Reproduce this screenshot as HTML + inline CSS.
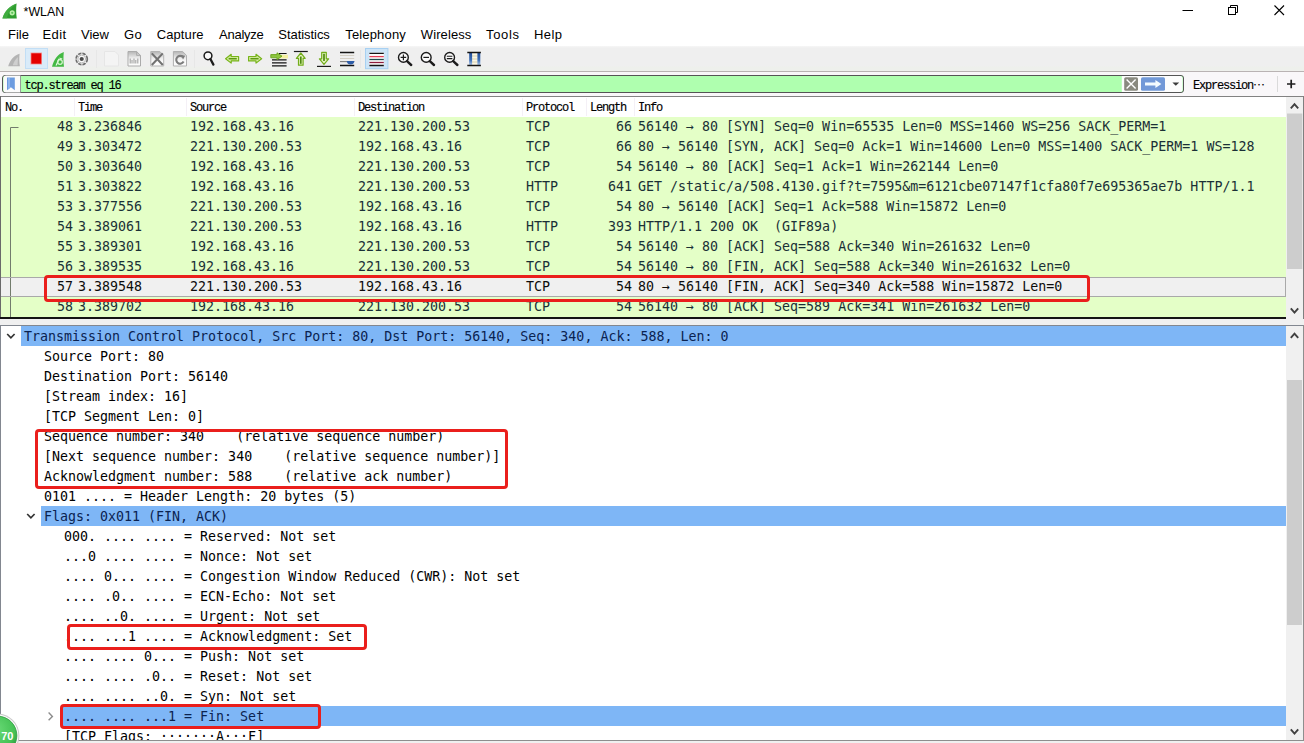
<!DOCTYPE html>
<html>
<head>
<meta charset="utf-8">
<title>*WLAN</title>
<style>
html,body{margin:0;padding:0;}
body{width:1304px;height:743px;overflow:hidden;background:#fff;position:relative;font-family:"Liberation Sans",sans-serif;color:#000;}
.abs{position:absolute;}
#title{left:0;top:0;width:1304px;height:24px;background:#fff;}
#title .t{position:absolute;left:23.6px;top:3px;font-size:12.4px;line-height:18px;color:#000;}
#menu{left:0;top:24px;width:1304px;height:22px;background:#fff;}
#menu span{position:absolute;top:2px;font-size:13px;line-height:18px;white-space:nowrap;}
#tool{left:0;top:46px;width:1304px;height:25px;background:linear-gradient(#f6f6f6 0,#efefef 2px,#efefef 20px,#eef0ec 21px);border-bottom:1px solid #b9b3b3;}
#filter{left:0;top:72px;width:1304px;height:24px;background:#f9f7f9;}
#fbox{left:2px;top:75px;width:1180px;height:16px;border:1px solid #555;border-radius:3px;background:#afffaf;}
.sim{font-family:"Liberation Mono",monospace;font-size:12px;letter-spacing:-1.2px;white-space:pre;color:#000;-webkit-text-stroke:0.15px #000;}
#plist{left:0;top:96px;width:1304px;height:222px;background:#fff;}
.mono{font-family:"DejaVu Sans Mono","Liberation Mono",monospace;font-size:13.3px;white-space:pre;color:#1a3036;}
.row{position:absolute;left:1px;width:1285px;height:20px;background:#e4ffc7;}
.row span{position:absolute;top:0;line-height:20px;}
.row .r{text-align:right;}
.hd span{position:absolute;top:.5px;line-height:20px;color:#000;}
.drow{position:absolute;height:20px;line-height:20px;color:#000;}
.red{position:absolute;border:3px solid #ea1f1c;border-radius:4px;box-sizing:border-box;}
</style>
</head>
<body>
<div id="title" class="abs"><span class="t">*WLAN</span></div>
<svg class="abs" style="left:0;top:0" width="1304" height="24" viewBox="0 0 1304 24">
<path d="M16.6 3.4 C10 5.5 4.5 11 2.4 18.4 L16.8 18.4 C16 13 16 8 16.6 3.4 Z" fill="#2f9e2f"/>
<path d="M16.6 3.4 C10 5.5 4.5 11 2.4 18.4 L7 18.4 C8 12 11.5 7 16.6 3.4 Z" fill="#4db84d" opacity=".55"/>
<circle cx="12.2" cy="12.8" r="2.6" fill="#b9f0a8"/>
<circle cx="12.2" cy="12.8" r="1.1" fill="#5cc45c"/>
<path d="M1182.5 10.5 H1193" stroke="#000" stroke-width="1" fill="none"/>
<rect x="1228.5" y="7.5" width="7" height="7" fill="#fff" stroke="#000" stroke-width="1"/>
<path d="M1230.5 7.5 V5.5 H1237.5 V12.5 H1235.5" fill="none" stroke="#000" stroke-width="1"/>
<path d="M1274.5 5.5 L1284 15 M1284 5.5 L1274.5 15" stroke="#000" stroke-width="1.1" fill="none"/>
</svg>
<div id="menu" class="abs"><span style="left:8px;letter-spacing:0px">File</span><span style="left:42.5px;letter-spacing:0.4px">Edit</span><span style="left:81px;letter-spacing:0px">View</span><span style="left:124px;letter-spacing:0.4px">Go</span><span style="left:156.7px;letter-spacing:0.1px">Capture</span><span style="left:219px;letter-spacing:-0.25px">Analyze</span><span style="left:278.3px;letter-spacing:-0.05px">Statistics</span><span style="left:345.3px;letter-spacing:0.15px">Telephony</span><span style="left:420.8px;letter-spacing:0.1px">Wireless</span><span style="left:486px;letter-spacing:0.65px">Tools</span><span style="left:534px;letter-spacing:0.45px">Help</span></div>
<div id="tool" class="abs"></div>
<svg class="abs" style="left:0;top:46px" width="500" height="26" viewBox="0 46 500 26">
<!-- 1 gray fin -->
<path d="M19.6 53.8 C14 55.6 10 60 8.2 66.3 L19.9 66.3 C19.2 62 19.2 58 19.6 53.8 Z" fill="#b4b4b4"/>
<path d="M18 57 C15.5 59 13.6 62 12.8 65.3 L17.6 65.3 Z" fill="#cfcfcf"/>
<!-- 2 stop -->
<rect x="25.5" y="48.5" width="22" height="20" fill="#d9ebf9" stroke="#c2def5" stroke-width="1"/>
<rect x="30.5" y="52.5" width="11.5" height="12" fill="#f4a0a0"/>
<rect x="31.3" y="53.3" width="10" height="10.4" fill="#e40000"/>
<!-- 3 green fin restart -->
<path d="M63.8 52 C58 54 54 59 52 66.8 L64 66.8 C63.3 62 63.3 57 63.8 52 Z" fill="#43b943"/>
<path d="M55.5 65.5 L58.5 58.5 L59.6 59 L56.8 65.5 Z" fill="#e9f9e9"/>
<circle cx="60" cy="62" r="2.3" fill="none" stroke="#d8f5d0" stroke-width="1.2"/>
<path d="M59.2 57.5 L62.6 58.4 L60.2 60.6 Z" fill="#d8f5d0"/>
<!-- 4 gear -->
<circle cx="81.7" cy="59" r="5.6" fill="#fafafa" stroke="#6e6e6e" stroke-width="1.7" stroke-dasharray="3.4 1.0"/>
<circle cx="81.7" cy="59" r="3.9" fill="none" stroke="#b9b9b9" stroke-width="1"/>
<circle cx="81.7" cy="59" r="2.1" fill="#4a4a4a"/>
<!-- separators -->
<path d="M96.5 50 V68 M194.5 50 V68 M360.5 50 V68" stroke="#e7e7e7" stroke-width="1"/>
<!-- 5 open (disabled, faint) -->
<path d="M104.5 51.5 H115 L118.5 55 V66 H104.5 Z" fill="#f4f4f4" stroke="#e6e6e6" stroke-width="1"/>
<!-- 6 save -->
<defs><linearGradient id="gf" x1="0" y1="0" x2="0" y2="1"><stop offset="0" stop-color="#b4b4b4"/><stop offset=".45" stop-color="#ececec"/><stop offset=".7" stop-color="#fbfbfb"/></linearGradient></defs>
<path d="M128 51.5 H136.6 L140.5 55.4 V66 H128 Z" fill="url(#gf)" stroke="#ababab" stroke-width="1"/>
<path d="M136.6 51.5 V55.4 H140.5" fill="none" stroke="#ababab" stroke-width="1"/>
<path d="M130.2 58.6 V63.6 M132 60 V63.6 M134 58.6 V63.6 M135.8 60 V63.6 M137.8 58.6 V63.6" stroke="#a2a2a2" stroke-width="1.1"/>
<!-- 7 close -->
<path d="M150.8 51.5 H159.8 L163.7 55.4 V66 H150.8 Z" fill="url(#gf)" stroke="#b4b4b4" stroke-width="1"/>
<path d="M151.8 53.4 L162.8 65 M162.8 53.4 L151.8 65" stroke="#727272" stroke-width="2.1"/>
<!-- 8 reload -->
<path d="M173.4 51.5 H182.6 L186.5 55.4 V66 H173.4 Z" fill="url(#gf)" stroke="#b0b0b0" stroke-width="1"/>
<path d="M183.6 61.6 A3.9 3.9 0 1 1 182.9 57" fill="none" stroke="#7c7c7c" stroke-width="2.1"/>
<path d="M181 55 L185.2 55.8 L183 59.4 Z" fill="#7c7c7c"/>
<!-- 9 find -->
<circle cx="208" cy="55.8" r="3.9" fill="#fafafa" stroke="#1c1c1c" stroke-width="1.5"/>
<path d="M210.4 59 L213.4 64.6" stroke="#1c1c1c" stroke-width="2.3" stroke-linecap="round"/>
<!-- 10 back -->
<path d="M225.6 58.7 L231.2 54.3 V56.5 H238.6 V60.9 H231.2 V63.1 Z" fill="#d9efa6" stroke="#77b41a" stroke-width="1.2" stroke-linejoin="round"/>
<path d="M228.6 58.7 H236.8" stroke="#5d9a10" stroke-width="1.6"/>
<!-- 11 forward -->
<path d="M261.6 58.7 L256 54.3 V56.5 H248.6 V60.9 H256 V63.1 Z" fill="#d9efa6" stroke="#77b41a" stroke-width="1.2" stroke-linejoin="round"/>
<path d="M250.4 58.7 H258.6" stroke="#5d9a10" stroke-width="1.6"/>
<!-- 12 goto -->
<rect x="278" y="54.8" width="10" height="3.6" fill="#f4f0a0"/>
<path d="M279 53.5 H286.6 M272 59.9 H286.6 M272 62.8 H286.6 M272 65.8 H286.6" stroke="#141414" stroke-width="1.2"/>
<path d="M270.8 54.6 H277 V52.8 L282 56.2 L277 59.6 V57.8 H270.8 Z" fill="#8cc63f" stroke="#6aa31a" stroke-width=".9" stroke-linejoin="round"/>
<!-- 13 first -->
<path d="M293.9 51.5 H307.8" stroke="#1c1c1c" stroke-width="1.2"/>
<path d="M300.8 53 L305.2 58.4 H303.1 V65.2 H298.5 V58.4 H296.4 Z" fill="#e4f4bf" stroke="#73ad1c" stroke-width="1.2" stroke-linejoin="round"/>
<path d="M300.8 56.5 V63.8" stroke="#4f8a10" stroke-width="1.7"/>
<!-- 14 last -->
<path d="M317 66.4 H331" stroke="#1c1c1c" stroke-width="1.2"/>
<path d="M324 64.4 L328.6 58.8 H326.3 V52.4 H321.7 V58.8 H319.4 Z" fill="#e4f4bf" stroke="#73ad1c" stroke-width="1.2" stroke-linejoin="round"/>
<path d="M324 53.8 V61" stroke="#4f8a10" stroke-width="1.7"/>
<!-- 15 autoscroll -->
<path d="M340 52.5 H354.2 M340 65.5 H354.2" stroke="#141414" stroke-width="1.3"/>
<path d="M340 55.5 H354.2 M340 58.5 H354.2" stroke="#d4cfc4" stroke-width="1"/>
<path d="M340 61.6 H354.2" stroke="#7d7d7d" stroke-width="1.1"/>
<path d="M346.8 61 H354.4 C354.4 63.4 352.4 64.6 350.6 64.6 C348.6 64.6 346.8 63.4 346.8 61 Z" fill="#2f5ea8"/>
<!-- 16 colorize -->
<rect x="365.5" y="48.5" width="22.4" height="20.2" fill="#cce4f7" stroke="#a7d0f2" stroke-width="1"/>
<rect x="369.4" y="52.6" width="14.4" height="13.6" fill="#fdfdfd"/>
<path d="M369.4 53.3 H383.8 M369.4 65.5 H383.8" stroke="#141414" stroke-width="1.3"/>
<path d="M369.4 56.6 H383.8" stroke="#e23e57" stroke-width="1.3"/>
<path d="M369.4 59.5 H383.8" stroke="#1f4e4e" stroke-width="1.3"/>
<path d="M369.4 62.5 H383.8" stroke="#8d1d3d" stroke-width="1.3"/>
<!-- 17 zoom in -->
<circle cx="403.4" cy="57.4" r="4.9" fill="#fafafa" stroke="#1c1c1c" stroke-width="1.4"/>
<path d="M407 61.2 L411.2 65" stroke="#1c1c1c" stroke-width="2.4" stroke-linecap="round"/>
<path d="M400.6 57.4 H406.2 M403.4 54.6 V60.2" stroke="#1c1c1c" stroke-width="1.2"/>
<!-- 18 zoom out -->
<circle cx="426.2" cy="57.4" r="4.9" fill="#fafafa" stroke="#1c1c1c" stroke-width="1.4"/>
<path d="M429.8 61.2 L434 65" stroke="#1c1c1c" stroke-width="2.4" stroke-linecap="round"/>
<path d="M423.4 57.4 H429" stroke="#1c1c1c" stroke-width="1.2"/>
<!-- 19 zoom 1:1 -->
<circle cx="449.6" cy="57.4" r="4.9" fill="#fafafa" stroke="#1c1c1c" stroke-width="1.4"/>
<path d="M453.2 61.2 L457.4 65" stroke="#1c1c1c" stroke-width="2.4" stroke-linecap="round"/>
<path d="M446.8 56.3 H452.4 M446.8 58.6 H452.4" stroke="#1c1c1c" stroke-width="1.1"/>
<!-- 20 resize columns -->
<rect x="472" y="53" width="5.6" height="12" fill="#fbf7e4"/>
<path d="M472 56 H477.6 M472 59 H477.6 M472 62 H477.6" stroke="#d9d2b0" stroke-width="1"/>
<defs><linearGradient id="gb" x1="0" y1="0" x2="0" y2="1"><stop offset="0" stop-color="#244f98"/><stop offset=".6" stop-color="#3f71b8"/><stop offset="1" stop-color="#a9c4e6"/></linearGradient></defs>
<rect x="469.2" y="53" width="2.9" height="12" fill="url(#gb)"/>
<rect x="477.4" y="53" width="2.9" height="12" fill="url(#gb)"/>
<path d="M467.3 52.5 H480.9 M467.3 65.5 H480.9" stroke="#141414" stroke-width="1.3"/>
</svg>
<div id="filter" class="abs"></div>
<div id="fbox" class="abs"></div>
<svg class="abs" style="left:0;top:72px" width="1304" height="24" viewBox="0 72 1304 24">
<path d="M6 75.5 H20.5 V92.5 H6 Q3.5 92.5 3.5 90 V78 Q3.5 75.5 6 75.5 Z" fill="#fbfbfb"/>
<path d="M20.5 76 V92" stroke="#9a9a9a" stroke-width="1"/>
<path d="M7 77.4 H14.8 V90.2 L10.9 87.2 L7 90.2 Z" fill="#6b9be0"/>
<path d="M8 78 H10 V88 L8 89.4 Z" fill="#8db4ec"/>
<path d="M1121.8 76 H1180 Q1182.5 76 1182.5 78.5 V89.5 Q1182.5 92 1180 92 H1121.8 Z" fill="#fdfdfd"/>
<rect x="1124.2" y="77.2" width="13.8" height="13.6" rx="1.6" fill="#8a8a80"/>
<path d="M1126.6 79.6 L1135.6 88.4 M1135.6 79.6 L1126.6 88.4" stroke="#fff" stroke-width="1.4"/>
<rect x="1141" y="77.2" width="24" height="13.6" rx="1.6" fill="#7299d8"/>
<path d="M1145 82.4 H1155.4 V80 L1161.4 84 L1155.4 88 V85.6 H1145 Z" fill="#f3fbff"/>
<path d="M1172.4 82.4 H1179.2 L1175.8 85.8 Z" fill="#3c3c3c"/>
<path d="M1277.5 76 V92" stroke="#dadada" stroke-width="1"/>
<path d="M1287 84 H1295.4 M1291.2 79.8 V88.2" stroke="#1e1e1e" stroke-width="1.7"/>
</svg>
<div class="abs sim" style="left:24.5px;top:78.5px;line-height:14px;">tcp.stream eq 16</div>
<div class="abs sim" style="left:1193px;top:78.5px;line-height:14px;">Expression<span style="position:absolute;left:60px;top:-1px;line-height:14px;font-family:'Noto Sans CJK JP',sans-serif;letter-spacing:0;-webkit-text-stroke:0">…</span></div>
<div id="plist" class="abs"></div>
<div class="abs hd sim" style="left:1px;top:97px;width:1285px;height:20px;background:#fff;">
<span style="left:4px">No.</span>
<span style="left:77px">Time</span>
<span style="left:189px">Source</span>
<span style="left:357px">Destination</span>
<span style="left:525px">Protocol</span>
<span style="left:589px">Length</span>
<span style="left:637px">Info</span>
</div>
<div class="row mono" style="top:117px;background:#e4ffc7">
<span class="r" style="left:0;width:72px">48</span>
<span style="left:77px">3.236846</span>
<span style="left:189px">192.168.43.16</span>
<span style="left:357px">221.130.200.53</span>
<span style="left:525px">TCP</span>
<span class="r" style="left:585px;width:46px">66</span>
<span style="left:637px">56140 → 80 [SYN] Seq=0 Win=65535 Len=0 MSS=1460 WS=256 SACK_PERM=1</span>
</div>
<div class="row mono" style="top:137px;background:#e4ffc7">
<span class="r" style="left:0;width:72px">49</span>
<span style="left:77px">3.303472</span>
<span style="left:189px">221.130.200.53</span>
<span style="left:357px">192.168.43.16</span>
<span style="left:525px">TCP</span>
<span class="r" style="left:585px;width:46px">66</span>
<span style="left:637px">80 → 56140 [SYN, ACK] Seq=0 Ack=1 Win=14600 Len=0 MSS=1400 SACK_PERM=1 WS=128</span>
</div>
<div class="row mono" style="top:157px;background:#e4ffc7">
<span class="r" style="left:0;width:72px">50</span>
<span style="left:77px">3.303640</span>
<span style="left:189px">192.168.43.16</span>
<span style="left:357px">221.130.200.53</span>
<span style="left:525px">TCP</span>
<span class="r" style="left:585px;width:46px">54</span>
<span style="left:637px">56140 → 80 [ACK] Seq=1 Ack=1 Win=262144 Len=0</span>
</div>
<div class="row mono" style="top:177px;background:#e4ffc7">
<span class="r" style="left:0;width:72px">51</span>
<span style="left:77px">3.303822</span>
<span style="left:189px">192.168.43.16</span>
<span style="left:357px">221.130.200.53</span>
<span style="left:525px">HTTP</span>
<span class="r" style="left:585px;width:46px">641</span>
<span style="left:637px">GET /static/a/508.4130.gif?t=7595&amp;m=6121cbe07147f1cfa80f7e695365ae7b HTTP/1.1</span>
</div>
<div class="row mono" style="top:197px;background:#e4ffc7">
<span class="r" style="left:0;width:72px">53</span>
<span style="left:77px">3.377556</span>
<span style="left:189px">221.130.200.53</span>
<span style="left:357px">192.168.43.16</span>
<span style="left:525px">TCP</span>
<span class="r" style="left:585px;width:46px">54</span>
<span style="left:637px">80 → 56140 [ACK] Seq=1 Ack=588 Win=15872 Len=0</span>
</div>
<div class="row mono" style="top:217px;background:#e4ffc7">
<span class="r" style="left:0;width:72px">54</span>
<span style="left:77px">3.389061</span>
<span style="left:189px">221.130.200.53</span>
<span style="left:357px">192.168.43.16</span>
<span style="left:525px">HTTP</span>
<span class="r" style="left:585px;width:46px">393</span>
<span style="left:637px">HTTP/1.1 200 OK  (GIF89a)</span>
</div>
<div class="row mono" style="top:237px;background:#e4ffc7">
<span class="r" style="left:0;width:72px">55</span>
<span style="left:77px">3.389301</span>
<span style="left:189px">192.168.43.16</span>
<span style="left:357px">221.130.200.53</span>
<span style="left:525px">TCP</span>
<span class="r" style="left:585px;width:46px">54</span>
<span style="left:637px">56140 → 80 [ACK] Seq=588 Ack=340 Win=261632 Len=0</span>
</div>
<div class="row mono" style="top:257px;background:#e4ffc7">
<span class="r" style="left:0;width:72px">56</span>
<span style="left:77px">3.389535</span>
<span style="left:189px">192.168.43.16</span>
<span style="left:357px">221.130.200.53</span>
<span style="left:525px">TCP</span>
<span class="r" style="left:585px;width:46px">54</span>
<span style="left:637px">56140 → 80 [FIN, ACK] Seq=588 Ack=340 Win=261632 Len=0</span>
</div>
<div class="row mono" style="top:277px;background:#f0f0f0;color:#0c0c0c">
<span class="r" style="left:0;width:72px">57</span>
<span style="left:77px">3.389548</span>
<span style="left:189px">221.130.200.53</span>
<span style="left:357px">192.168.43.16</span>
<span style="left:525px">TCP</span>
<span class="r" style="left:585px;width:46px">54</span>
<span style="left:637px">80 → 56140 [FIN, ACK] Seq=340 Ack=588 Win=15872 Len=0</span>
</div>
<div class="row mono" style="top:297px;background:#e4ffc7">
<span class="r" style="left:0;width:72px">58</span>
<span style="left:77px">3.389702</span>
<span style="left:189px">192.168.43.16</span>
<span style="left:357px">221.130.200.53</span>
<span style="left:525px">TCP</span>
<span class="r" style="left:585px;width:46px">54</span>
<span style="left:637px">56140 → 80 [ACK] Seq=589 Ack=341 Win=261632 Len=0</span>
</div>
<div class="abs" style="left:0;top:317px;width:1304px;height:9px;background:#f0f0f0;"></div>
<div class="abs" style="left:0;top:317px;width:1286px;height:1px;background:#333;"></div>
<div class="abs" style="left:0;top:325px;width:1304px;height:418px;background:#fff;border-top:1px solid #828790;"></div>
<div class="abs" style="left:21px;top:326px;width:1265px;height:20px;background:#7eb6f6;"></div>
<div class="drow mono" style="left:24px;top:327px;color:#0b2350">Transmission Control Protocol, Src Port: 80, Dst Port: 56140, Seq: 340, Ack: 588, Len: 0</div>
<div class="drow mono" style="left:44px;top:347px;color:#000">Source Port: 80</div>
<div class="drow mono" style="left:44px;top:367px;color:#000">Destination Port: 56140</div>
<div class="drow mono" style="left:44px;top:387px;color:#000">[Stream index: 16]</div>
<div class="drow mono" style="left:44px;top:407px;color:#000">[TCP Segment Len: 0]</div>
<div class="drow mono" style="left:44px;top:427px;color:#000">Sequence number: 340    (relative sequence number)</div>
<div class="drow mono" style="left:44px;top:447px;color:#000">[Next sequence number: 340    (relative sequence number)]</div>
<div class="drow mono" style="left:44px;top:467px;color:#000">Acknowledgment number: 588    (relative ack number)</div>
<div class="drow mono" style="left:44px;top:487px;color:#000">0101 .... = Header Length: 20 bytes (5)</div>
<div class="abs" style="left:41px;top:506px;width:1245px;height:20px;background:#7eb6f6;"></div>
<div class="drow mono" style="left:44px;top:507px;color:#0b2350">Flags: 0x011 (FIN, ACK)</div>
<div class="drow mono" style="left:64px;top:527px;color:#000">000. .... .... = Reserved: Not set</div>
<div class="drow mono" style="left:64px;top:547px;color:#000">...0 .... .... = Nonce: Not set</div>
<div class="drow mono" style="left:64px;top:567px;color:#000">.... 0... .... = Congestion Window Reduced (CWR): Not set</div>
<div class="drow mono" style="left:64px;top:587px;color:#000">.... .0.. .... = ECN-Echo: Not set</div>
<div class="drow mono" style="left:64px;top:607px;color:#000">.... ..0. .... = Urgent: Not set</div>
<div class="drow mono" style="left:64px;top:627px;color:#000">.... ...1 .... = Acknowledgment: Set</div>
<div class="drow mono" style="left:64px;top:647px;color:#000">.... .... 0... = Push: Not set</div>
<div class="drow mono" style="left:64px;top:667px;color:#000">.... .... .0.. = Reset: Not set</div>
<div class="drow mono" style="left:64px;top:687px;color:#000">.... .... ..0. = Syn: Not set</div>
<div class="abs" style="left:61px;top:706px;width:1225px;height:20px;background:#7eb6f6;"></div>
<div class="drow mono" style="left:64px;top:707px;color:#0b2350">.... .... ...1 = Fin: Set</div>
<div class="drow mono" style="left:64px;top:727px;color:#000">[TCP Flags: ·······A···F]</div>
<svg class="abs" style="left:0;top:96px" width="1304" height="230" viewBox="0 96 1304 230">
<path d="M0 96.5 H1304" stroke="#828282" stroke-width="1"/>
<path d="M0.5 96 V318" stroke="#6a6a6a" stroke-width="1"/>
<path d="M74.5 98 V116 M186.5 98 V116 M354.5 98 V116 M522.5 98 V116 M586.5 98 V116 M634.5 98 V116" stroke="#f4f0f6" stroke-width="1"/>
<path d="M18.5 127.5 H10.5 V317" fill="none" stroke="#727c6c" stroke-width="1"/>
<path d="M1 277.5 H1286 M1 296.5 H1286" stroke="#a9a9a9" stroke-width="1"/>
<rect x="1286" y="97" width="18" height="222" fill="#f0f0f0"/>
<rect x="1287" y="113.5" width="15.3" height="155.5" fill="#cdcdcd"/>
<path d="M1303.5 96 V319" stroke="#7f7f7f" stroke-width="1"/>
<path d="M1285.5 277 V297" stroke="#a9a9a9" stroke-width="1"/>
<path d="M1290.8 108.4 L1294.5 104.2 L1298.2 108.4" fill="none" stroke="#404040" stroke-width="1.9"/>
<path d="M1290.8 308.4 L1294.5 312.6 L1298.2 308.4" fill="none" stroke="#404040" stroke-width="1.9"/>
<path d="M0 318 H1286" stroke="#141414" stroke-width="2"/>
</svg>
<svg class="abs" style="left:0;top:325px" width="1304" height="418" viewBox="0 325 1304 418">
<path d="M0.5 325 V741" stroke="#828790" stroke-width="1"/>
<rect x="0" y="741" width="1304" height="2" fill="#f0f0f0"/>
<path d="M0 740.5 H1304" stroke="#8e8e8e" stroke-width="1"/>
<rect x="1286" y="326" width="17" height="414" fill="#f0f0f0"/>
<path d="M1303.5 325 V741" stroke="#8e8e8e" stroke-width="1"/>
<rect x="1287" y="380" width="15" height="245" fill="#cdcdcd"/>
<path d="M1290.8 337.8 L1294.5 333.6 L1298.2 337.8" fill="none" stroke="#404040" stroke-width="1.9"/>
<path d="M1290.8 729.4 L1294.5 733.6 L1298.2 729.4" fill="none" stroke="#404040" stroke-width="1.9"/>
<path d="M7.2 334 L10.9 337.8 L14.6 334" fill="none" stroke="#333" stroke-width="1.7"/>
<path d="M27.2 514 L30.9 517.8 L34.6 514" fill="none" stroke="#333" stroke-width="1.7"/>
<path d="M48.6 712.6 L52.4 716.4 L48.6 720.2" fill="none" stroke="#8c8c8c" stroke-width="1.4"/>
<defs><radialGradient id="gg" cx="0.45" cy="0.35" r="0.65"><stop offset="0" stop-color="#6bdb78"/><stop offset=".75" stop-color="#45c255"/><stop offset="1" stop-color="#2a9a3c"/></radialGradient></defs>
<circle cx="-2.6" cy="735.6" r="22" fill="#c9c9c9"/>
<circle cx="-2.6" cy="735.6" r="21" fill="#fdfdfd"/>
<circle cx="-2.6" cy="735.6" r="19.5" fill="url(#gg)" stroke="#2c9a3e" stroke-width=".8"/>
<text x="1.2" y="740" font-family="Liberation Sans, sans-serif" font-weight="bold" font-size="11" fill="#fff">70</text>
</svg>
<div class="red" style="left:44px;top:275px;width:1046px;height:27px;"></div>
<div class="red" style="left:35px;top:429px;width:473px;height:60px;"></div>
<div class="red" style="left:67px;top:624px;width:300px;height:26px;"></div>
<div class="red" style="left:60px;top:704px;width:261px;height:25px;"></div>
</body>
</html>
